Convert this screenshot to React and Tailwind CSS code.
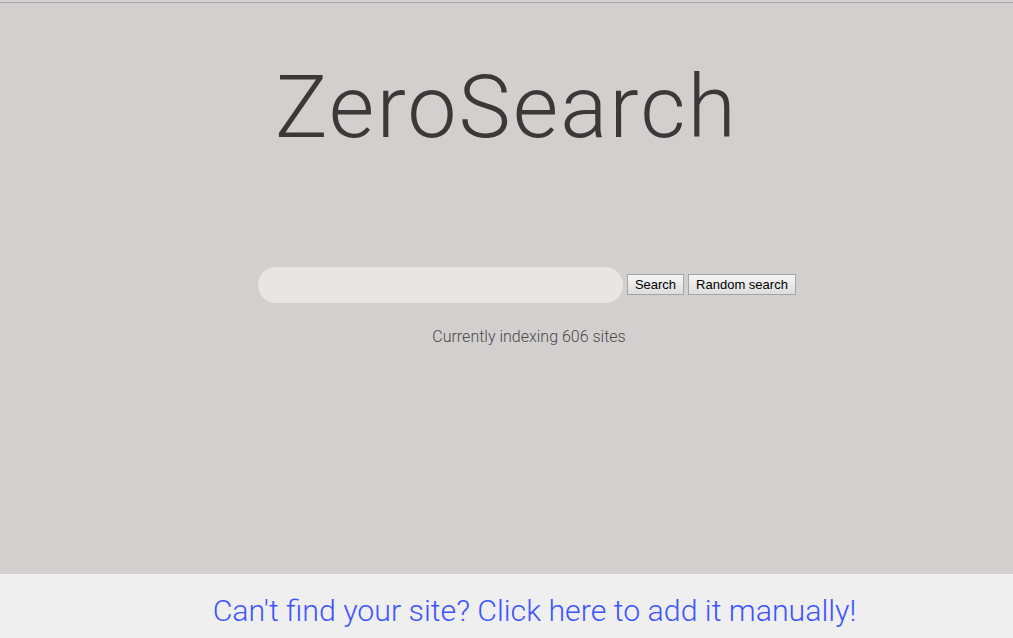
export default function App() {
  return (
    <div className="flex h-[638px] w-full flex-col overflow-hidden bg-[#d2cfce] font-['Roboto',sans-serif]">
      <div className="h-[2px] bg-[#d6d3d2]" />
      <div className="h-[1px] bg-[#a7a5a5]" />

      {/* main */}
      <div className="flex flex-1 flex-col">
        <div className="flex justify-center pt-[60px]">
          <h1 className="text-[88px] font-light leading-none tracking-[2px] text-[#3b3938]">ZeroSearch</h1>
        </div>

        <div className="mt-[116px] flex items-center pl-[258px]">
          <input
            type="text"
            className="h-[36px] w-[365px] rounded-full bg-[#e7e6e4] px-4 outline-none"
          />
          <button className="mb-[2px] ml-[4px] h-[21px] w-[57px] border border-[#a5a5a5] bg-gradient-to-b from-[#f6f6f6] to-[#dddddd] font-['Liberation_Sans',Arial,sans-serif] text-[13px] leading-none text-black">
            Search
          </button>
          <button className="mb-[2px] ml-[4px] h-[21px] w-[108px] border border-[#a5a5a5] bg-gradient-to-b from-[#f6f6f6] to-[#dddddd] font-['Liberation_Sans',Arial,sans-serif] text-[13px] leading-none text-black">
            Random search
          </button>
        </div>

        <p className="mt-[22px] pl-[45px] text-center text-[16px] font-light text-[#4a4a4a]">
          Currently indexing 606 sites
        </p>
      </div>

      {/* footer */}
      <div className="flex h-[64px] items-center justify-center bg-[#efefef] pl-[56px] pt-[9px]">
        <a href="#" className="text-[30.3px] font-light text-[#3d55ff]">
          Can't find your site? Click here to add it manually!
        </a>
      </div>
    </div>
  );
}
